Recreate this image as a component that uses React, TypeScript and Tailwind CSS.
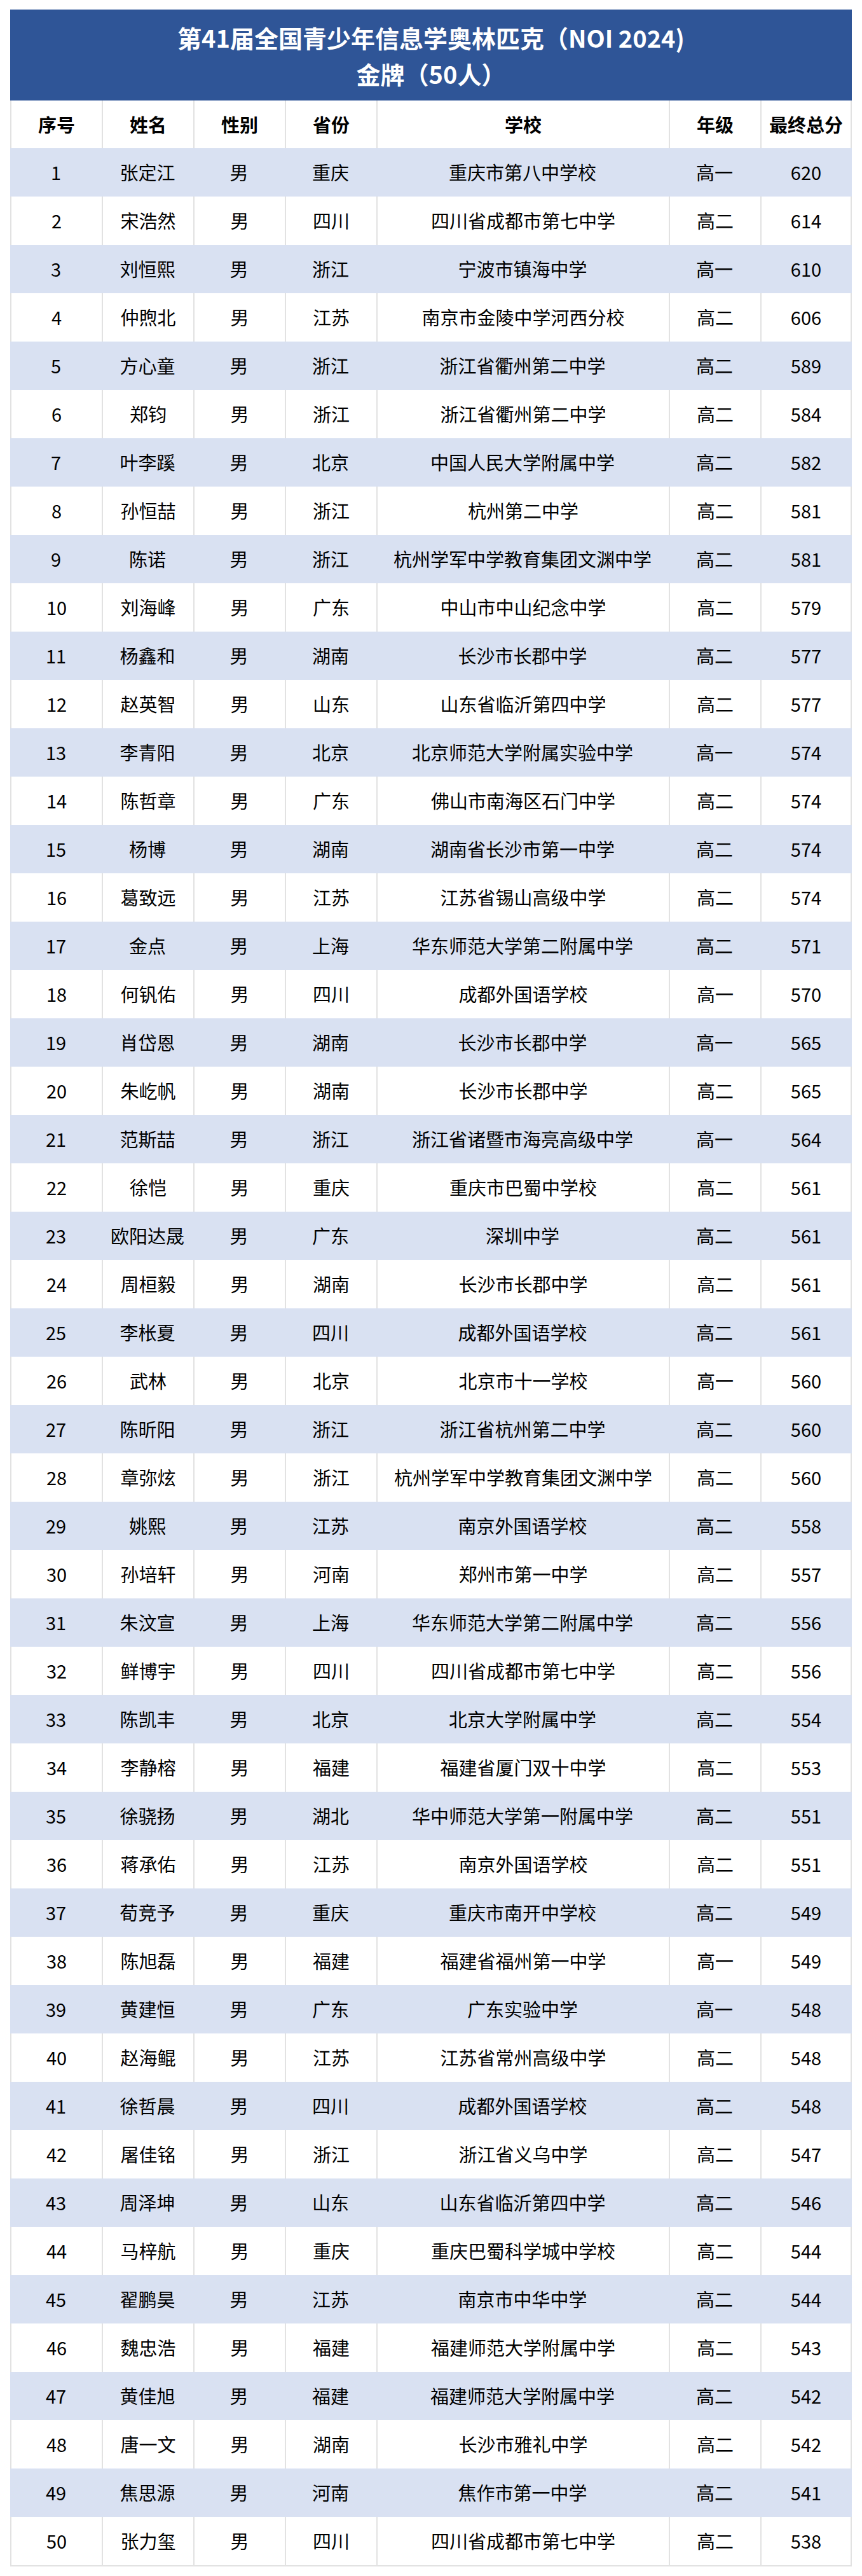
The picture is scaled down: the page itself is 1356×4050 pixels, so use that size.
const rows: [string, string, string, string, string, number][] = [
  ["张定江", "男", "重庆", "重庆市第八中学校", "高一", 620],
  ["宋浩然", "男", "四川", "四川省成都市第七中学", "高二", 614],
  ["刘恒熙", "男", "浙江", "宁波市镇海中学", "高一", 610],
  ["仲煦北", "男", "江苏", "南京市金陵中学河西分校", "高二", 606],
  ["方心童", "男", "浙江", "浙江省衢州第二中学", "高二", 589],
  ["郑钧", "男", "浙江", "浙江省衢州第二中学", "高二", 584],
  ["叶李蹊", "男", "北京", "中国人民大学附属中学", "高二", 582],
  ["孙恒喆", "男", "浙江", "杭州第二中学", "高二", 581],
  ["陈诺", "男", "浙江", "杭州学军中学教育集团文渊中学", "高二", 581],
  ["刘海峰", "男", "广东", "中山市中山纪念中学", "高二", 579],
  ["杨鑫和", "男", "湖南", "长沙市长郡中学", "高二", 577],
  ["赵英智", "男", "山东", "山东省临沂第四中学", "高二", 577],
  ["李青阳", "男", "北京", "北京师范大学附属实验中学", "高一", 574],
  ["陈哲章", "男", "广东", "佛山市南海区石门中学", "高二", 574],
  ["杨博", "男", "湖南", "湖南省长沙市第一中学", "高二", 574],
  ["葛致远", "男", "江苏", "江苏省锡山高级中学", "高二", 574],
  ["金点", "男", "上海", "华东师范大学第二附属中学", "高二", 571],
  ["何钒佑", "男", "四川", "成都外国语学校", "高一", 570],
  ["肖岱恩", "男", "湖南", "长沙市长郡中学", "高一", 565],
  ["朱屹帆", "男", "湖南", "长沙市长郡中学", "高二", 565],
  ["范斯喆", "男", "浙江", "浙江省诸暨市海亮高级中学", "高一", 564],
  ["徐恺", "男", "重庆", "重庆市巴蜀中学校", "高二", 561],
  ["欧阳达晟", "男", "广东", "深圳中学", "高二", 561],
  ["周桓毅", "男", "湖南", "长沙市长郡中学", "高二", 561],
  ["李枨夏", "男", "四川", "成都外国语学校", "高二", 561],
  ["武林", "男", "北京", "北京市十一学校", "高一", 560],
  ["陈昕阳", "男", "浙江", "浙江省杭州第二中学", "高二", 560],
  ["章弥炫", "男", "浙江", "杭州学军中学教育集团文渊中学", "高二", 560],
  ["姚熙", "男", "江苏", "南京外国语学校", "高二", 558],
  ["孙培轩", "男", "河南", "郑州市第一中学", "高二", 557],
  ["朱汶宣", "男", "上海", "华东师范大学第二附属中学", "高二", 556],
  ["鲜博宇", "男", "四川", "四川省成都市第七中学", "高二", 556],
  ["陈凯丰", "男", "北京", "北京大学附属中学", "高二", 554],
  ["李静榕", "男", "福建", "福建省厦门双十中学", "高二", 553],
  ["徐骁扬", "男", "湖北", "华中师范大学第一附属中学", "高二", 551],
  ["蒋承佑", "男", "江苏", "南京外国语学校", "高二", 551],
  ["荀竞予", "男", "重庆", "重庆市南开中学校", "高二", 549],
  ["陈旭磊", "男", "福建", "福建省福州第一中学", "高一", 549],
  ["黄建恒", "男", "广东", "广东实验中学", "高一", 548],
  ["赵海鲲", "男", "江苏", "江苏省常州高级中学", "高二", 548],
  ["徐哲晨", "男", "四川", "成都外国语学校", "高二", 548],
  ["屠佳铭", "男", "浙江", "浙江省义乌中学", "高二", 547],
  ["周泽坤", "男", "山东", "山东省临沂第四中学", "高二", 546],
  ["马梓航", "男", "重庆", "重庆巴蜀科学城中学校", "高二", 544],
  ["翟鹏昊", "男", "江苏", "南京市中华中学", "高二", 544],
  ["魏忠浩", "男", "福建", "福建师范大学附属中学", "高二", 543],
  ["黄佳旭", "男", "福建", "福建师范大学附属中学", "高二", 542],
  ["唐一文", "男", "湖南", "长沙市雅礼中学", "高二", 542],
  ["焦思源", "男", "河南", "焦作市第一中学", "高二", 541],
  ["张力玺", "男", "四川", "四川省成都市第七中学", "高二", 538],
];

const headers = ["序号", "姓名", "性别", "省份", "学校", "年级", "最终总分"];

const cols = "grid grid-cols-[144px_144px_144px_144px_460px_144px_144px]";

function Cell({ children, striped, last }: { children: React.ReactNode; striped: boolean; last: boolean }) {
  return (
    <div
      className={
        "flex items-center justify-center whitespace-nowrap " +
        (striped ? "" : "border-l-2 border-[#e2e2e2] " + (last ? "border-r-2" : ""))
      }
    >
      {children}
    </div>
  );
}

export default function App() {
  return (
    <div className="min-h-[4050px] bg-white pl-[16px] pt-[15px] font-['Noto_Sans_CJK_SC',sans-serif] text-black">
      <div className="w-[1324px]">
        <div className="flex h-[143px] flex-col items-center justify-center bg-[#2f5597] text-[38px] font-bold leading-[57px] text-white">
          <div>第41届全国青少年信息学奥林匹克（NOI 2024)</div>
          <div>金牌（50人）</div>
        </div>

        <div className={cols + " h-[75px] bg-white text-[29px] font-bold"}>
          {headers.map((h, i) => (
            <Cell key={h} striped={false} last={i === headers.length - 1}>
              {h}
            </Cell>
          ))}
        </div>

        <div className="border-b-2 border-[#e2e2e2]">
          {rows.map((r, idx) => {
            const striped = idx % 2 === 0;
            const vals = [String(idx + 1), r[0], r[1], r[2], r[3], r[4], String(r[5])];
            return (
              <div
                key={idx}
                className={cols + " h-[76px] text-[29px] " + (striped ? "bg-[#d9e1f2]" : "bg-white")}
              >
                {vals.map((v, i) => (
                  <Cell key={i} striped={striped} last={i === vals.length - 1}>
                    {v}
                  </Cell>
                ))}
              </div>
            );
          })}
        </div>
      </div>
    </div>
  );
}
